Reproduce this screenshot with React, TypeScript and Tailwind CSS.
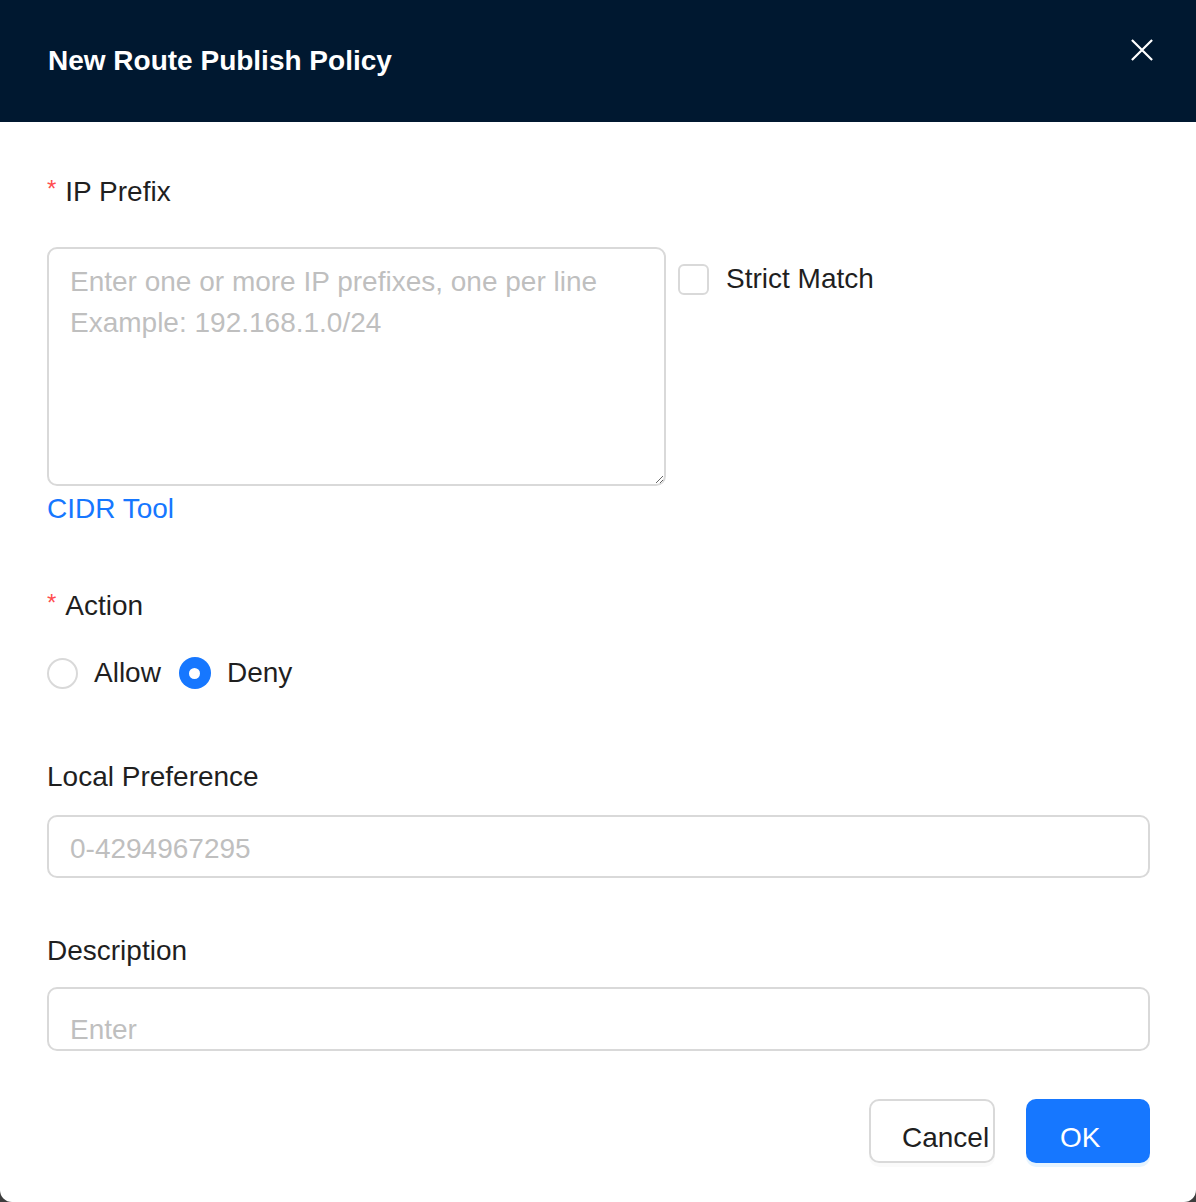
import { useState } from "react";

const font = "font-['Liberation_Sans',Arial,sans-serif]";

function Label({ text, required }: { text: string; required?: boolean }) {
  return (
    <div className="flex h-10 items-center text-[28px] leading-10 text-[#1f1f1f]">
      {required ? <span className="mr-[9px] mt-[-6px] text-[24px] text-[#ff4d4f]">*</span> : null}
      <span>{text}</span>
    </div>
  );
}

export default function App() {
  const [action, setAction] = useState<"allow" | "deny">("deny");
  const [strict, setStrict] = useState(false);

  return (
    <div className={`${font} min-h-[1202px] w-full bg-[#3d3d3d]`}>
      <div className="flex h-[1202px] flex-col overflow-hidden rounded-b-[12px] bg-white">
        <header className="flex h-[122px] shrink-0 items-center justify-between bg-[#001830] pl-12 pr-[43px]">
          <h1 className="text-[28px] font-bold text-white">New Route Publish Policy</h1>
          <button className="mt-[-22px] flex h-[22px] w-[22px] items-center justify-center" aria-label="Close">
            <svg width="24" height="24" viewBox="0 0 24 24" fill="none" stroke="white" strokeWidth="2.4">
              <path d="M1 1L23 23M23 1L1 23" />
            </svg>
          </button>
        </header>

        <div className="flex flex-col pl-[47px] pr-[46px] pt-[50px]">
          <Label text="IP Prefix" required />

          <div className="mt-[35px] flex items-start">
            <textarea
              className="h-[239px] w-[619px] rounded-[10px] border-2 border-[#d9d9d9] px-[21px] py-[12px] text-[28px] leading-[41px] text-[#1f1f1f] outline-none placeholder:text-[#bfbfbf]"
              placeholder={"Enter one or more IP prefixes, one per line\nExample: 192.168.1.0/24"}
            />
            <label className="ml-3 mt-[11px] flex items-center">
              <button
                onClick={() => setStrict(!strict)}
                className={`h-[31px] w-[31px] rounded-[6px] border-2 ${strict ? "border-[#1677ff] bg-[#1677ff]" : "border-[#d9d9d9] bg-white"}`}
              />
              <span className="ml-[17px] text-[28px] text-[#1f1f1f]">Strict Match</span>
            </label>
          </div>

          <a className="mt-[3px] h-10 text-[28px] leading-10 text-[#1677ff]">CIDR Tool</a>

          <div className="mt-[57px]">
            <Label text="Action" required />
          </div>

          <div className="mt-[27px] flex h-10 items-center text-[28px] text-[#1f1f1f]">
            <button onClick={() => setAction("allow")} className="flex items-center">
              <span
                className={`flex h-[31px] w-[31px] items-center justify-center rounded-full ${action === "allow" ? "bg-[#1677ff]" : "border-2 border-[#d9d9d9] bg-white"}`}
              >
                {action === "allow" ? <span className="h-[11px] w-[11px] rounded-full bg-white" /> : null}
              </span>
              <span className="ml-4">Allow</span>
            </button>
            <button onClick={() => setAction("deny")} className="ml-[18px] flex items-center">
              <span
                className={`flex h-[32px] w-[32px] items-center justify-center rounded-full ${action === "deny" ? "bg-[#1677ff]" : "border-2 border-[#d9d9d9] bg-white"}`}
              >
                {action === "deny" ? <span className="h-[11px] w-[11px] rounded-full bg-white" /> : null}
              </span>
              <span className="ml-[16px]">Deny</span>
            </button>
          </div>

          <div className="mt-16">
            <Label text="Local Preference" />
          </div>
          <input
            className="mt-[18px] h-[63px] w-full rounded-[10px] border-2 border-[#d9d9d9] px-[21px] pt-[5px] text-[28px] text-[#1f1f1f] outline-none placeholder:text-[#bfbfbf]"
            placeholder="0-4294967295"
          />

          <div className="mt-[53px]">
            <Label text="Description" />
          </div>
          <input
            className="mt-4 h-[64px] w-full rounded-[10px] border-2 border-[#d9d9d9] px-[21px] pt-[22px] pb-0 text-[28px] leading-10 text-[#1f1f1f] outline-none placeholder:text-[#bfbfbf]"
            placeholder="Enter"
          />

          <div className="mt-12 flex justify-end gap-[31px]">
            <button className="h-16 w-[126px] rounded-[10px] border-2 border-[#d9d9d9] bg-white pl-[31px] pt-[14px] text-left text-[28px] text-[#1f1f1f] shadow-[0_4px_0_rgba(0,0,0,0.02)]">
              Cancel
            </button>
            <button className="h-16 w-[124px] rounded-[10px] bg-[#1677ff] pl-[34px] pt-[14px] text-left text-[28px] text-white shadow-[0_4px_0_rgba(5,145,255,0.1)]">
              OK
            </button>
          </div>
        </div>
      </div>
    </div>
  );
}
